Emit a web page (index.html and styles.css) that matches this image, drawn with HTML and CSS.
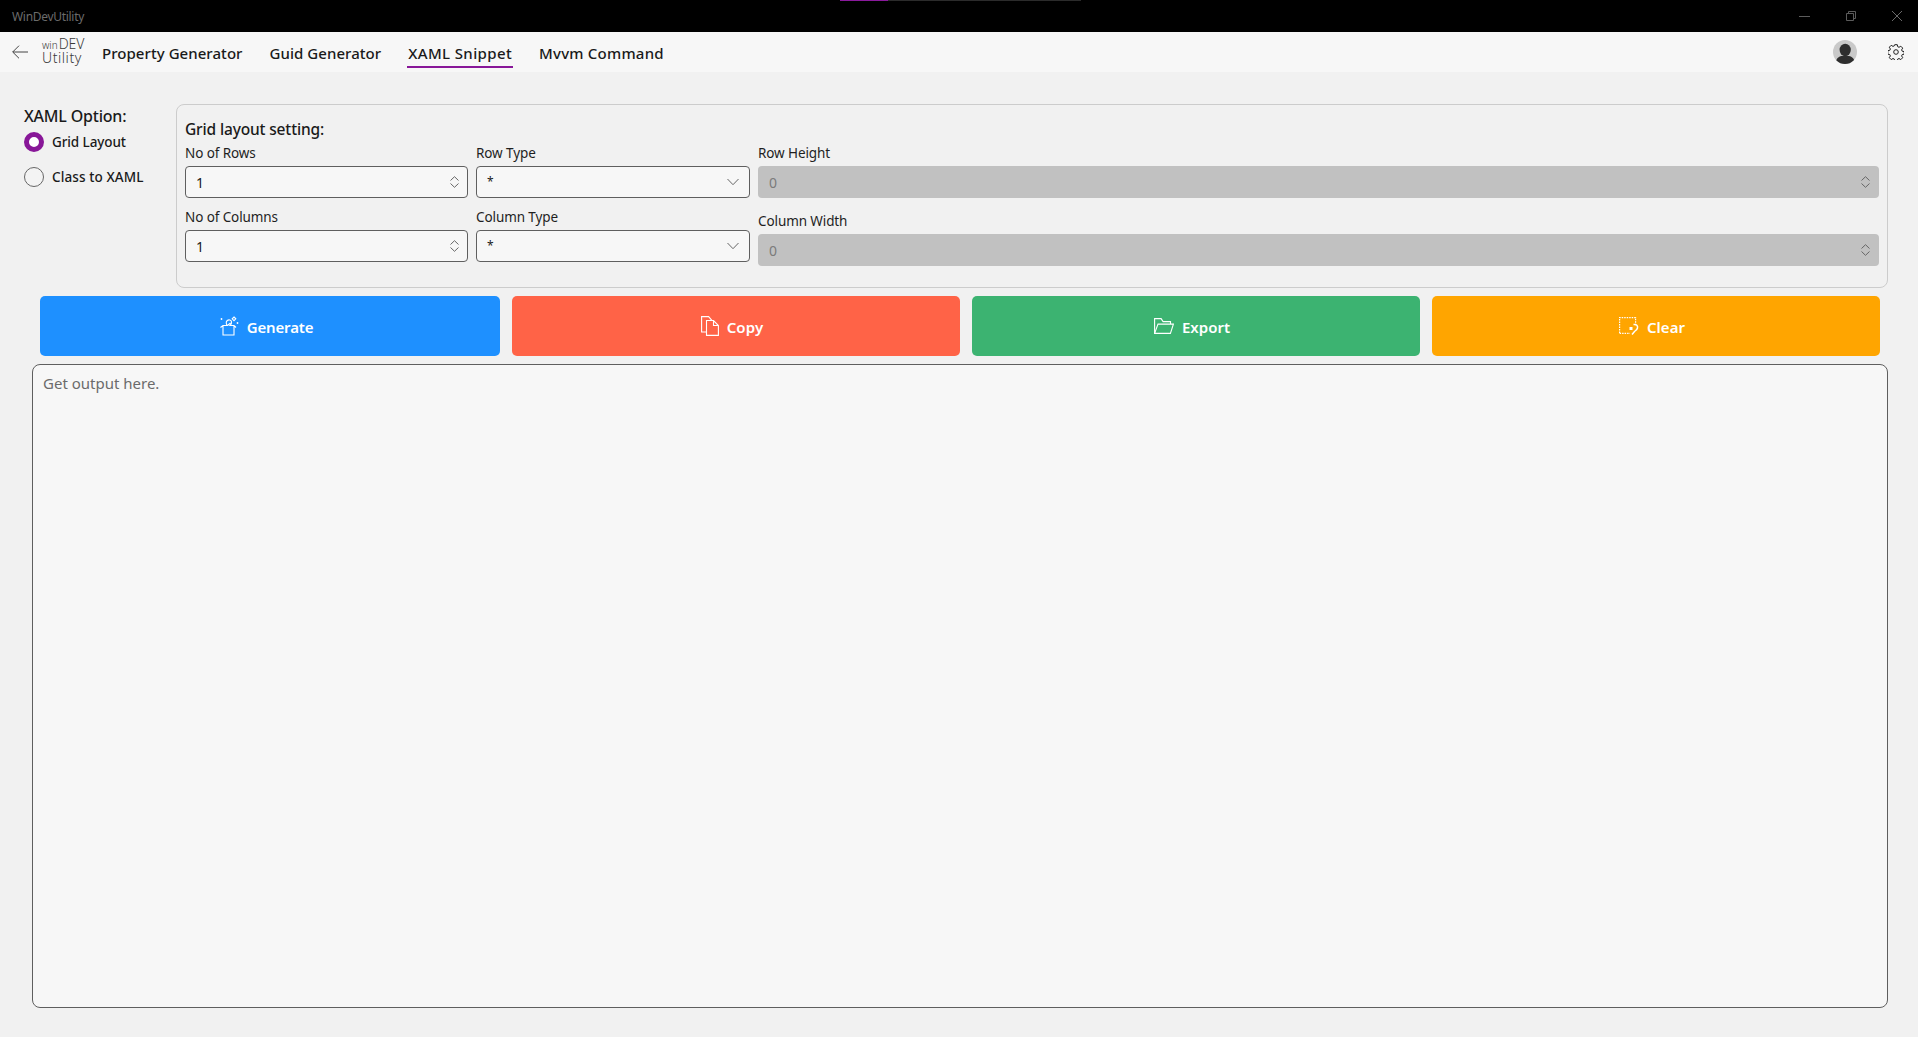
FILE: index.html
```html
<!DOCTYPE html>
<html lang="en">
<head>
<meta charset="utf-8">
<title>WinDevUtility</title>
<link rel="stylesheet" href="styles.css">
</head>
<body>
<div class="progress"><span class="progress-fill"></span><span class="progress-rest"></span></div>
<header class="titlebar">
  <span class="app-title">WinDevUtility</span>
  <div class="window-controls">
    <svg class="win-min" width="11" height="1" viewBox="0 0 11 1"><path d="M0 .5h11" stroke="#5c5c5c"/></svg>
    <svg class="win-restore" width="10" height="10" viewBox="0 0 10 10" fill="none" stroke="#5c5c5c"><path d="M.5 2.5h7v7h-7zM2.5 2.5v-2h7v7h-2"/></svg>
    <svg class="win-close" width="10" height="10" viewBox="0 0 10 10" fill="none" stroke="#6a6a6a"><path d="M0 0l10 10M10 0L0 10"/></svg>
  </div>
</header>
<nav class="navbar">
  <svg class="back" width="16" height="14" viewBox="0 0 16 14" fill="none" stroke="#444" stroke-width="1"><path d="M16 7H.8M7 .7L.7 7l6.3 6.3"/></svg>
  <div class="logo"><div class="logo-top"><span class="logo-win">win</span><span class="logo-dev">DEV</span></div><div class="logo-util">Utility</div></div>
  <div class="tabs">
    <a class="tab">Property Generator</a>
    <a class="tab">Guid Generator</a>
    <a class="tab tab-active">XAML Snippet</a>
    <a class="tab tab-mvvm">Mvvm Command</a>
  </div>
  <div class="nav-right">
    <svg class="avatar" width="24" height="24" viewBox="0 0 24 24"><circle cx="12" cy="12" r="12" fill="#c9c9c9"/><clipPath id="av"><circle cx="12" cy="12" r="12"/></clipPath><g clip-path="url(#av)" fill="#2e2e2e"><ellipse cx="12.2" cy="10" rx="5.6" ry="6.2"/><path d="M2.5 24c0-5 3-7.500 6-8h7.500c3 .5 6 3 6 8z"/></g></svg>
    <svg class="gear" width="16" height="16" viewBox="0 0 16 16" fill="none" stroke="#222" stroke-width="1"><circle cx="8" cy="8" r="2.300"/><path d="M6.700.7h2.600l.4 2 1.300.6 1.800-1.100 1.900 1.900-1.100 1.800.6 1.300 2 .4v2.600l-2 .4-.6 1.300 1.100 1.800-1.900 1.900-1.800-1.100-1.300.6-.4 2H6.700l-.4-2-1.300-.6-1.800 1.100-1.900-1.900 1.100-1.800-.6-1.300-2-.4V6.700l2-.4.6-1.300-1.100-1.800 1.900-1.900L5 2.400l1.300-.6z"/></svg>
  </div>
</nav>
<main class="content">
  <section class="options">
    <aside class="xaml-option">
      <div class="option-title">XAML Option:</div>
      <label class="radio"><span class="radio-dot radio-on"></span>Grid Layout</label>
      <label class="radio radio-second"><span class="radio-dot"></span>Class to XAML</label>
    </aside>
    <div class="group">
      <div class="group-title">Grid layout setting:</div>
      <div class="group-cols">
        <div class="col col-a">
          <div class="field"><div class="field-label">No of Rows</div>
            <div class="input"><span>1</span><svg class="spin" width="9" height="12" viewBox="0 0 9 12" fill="none" stroke="#666"><path d="M.5 4.500L4.500.7l4 3.800M.5 7.500l4 3.800 4-3.800"/></svg></div></div>
          <div class="field"><div class="field-label">No of Columns</div>
            <div class="input"><span>1</span><svg class="spin" width="9" height="12" viewBox="0 0 9 12" fill="none" stroke="#666"><path d="M.5 4.500L4.500.7l4 3.800M.5 7.500l4 3.800 4-3.800"/></svg></div></div>
        </div>
        <div class="col col-b">
          <div class="field"><div class="field-label">Row Type</div>
            <div class="input"><span class="star">*</span><svg class="chev" width="12" height="8" viewBox="0 0 12 8" fill="none" stroke="#666"><path d="M.5 1L6 6.700 11.500 1"/></svg></div></div>
          <div class="field"><div class="field-label">Column Type</div>
            <div class="input"><span class="star">*</span><svg class="chev" width="12" height="8" viewBox="0 0 12 8" fill="none" stroke="#666"><path d="M.5 1L6 6.700 11.500 1"/></svg></div></div>
        </div>
        <div class="col col-c">
          <div class="field"><div class="field-label">Row Height</div>
            <div class="input input-off"><span>0</span><svg class="spin" width="9" height="12" viewBox="0 0 9 12" fill="none" stroke="#666"><path d="M.5 4.500L4.500.7l4 3.800M.5 7.500l4 3.800 4-3.800"/></svg></div></div>
          <div class="field"><div class="field-label">Column Width</div>
            <div class="input input-off"><span>0</span><svg class="spin" width="9" height="12" viewBox="0 0 9 12" fill="none" stroke="#666"><path d="M.5 4.500L4.500.7l4 3.800M.5 7.500l4 3.800 4-3.800"/></svg></div></div>
        </div>
      </div>
    </div>
  </section>
  <section class="actions">
    <button class="btn btn-generate">
      <svg width="20" height="20" viewBox="0 0 20 20" fill="none" stroke="#fff" stroke-width="1.100"><path d="M4 9.500V19h11V9.500M1.500 11.500L4 9.500h4.500l3-2.500M15 9.500l2 2M8.500 9.500c-1.500-1-1.800-3.800-.2-5 1.600-1.200 3.800-.5 4.200 1.200.3 1.500-.2 2.800-1.500 3.800H15"/><path d="M15 1l1.800 1.800L15 4.600l-1.800-1.800z"/><circle cx="2.500" cy="3" r=".9" fill="#fff" stroke="none"/><circle cx="18.500" cy="7" r=".9" fill="#fff" stroke="none"/></svg>
      <span class="btn-text">Generate</span></button>
    <button class="btn btn-copy">
      <svg width="18" height="20" viewBox="0 0 18 20" fill="none" stroke="#fff" stroke-width="1.100"><path d="M5.500 16H.6V.6h7l3.500 4"/><path d="M5.500 4.500h7l4.900 5V19.400H5.500zM12.500 4.500v5h4.900"/></svg>
      <span class="btn-text">Copy</span></button>
    <button class="btn btn-export">
      <svg width="20" height="16" viewBox="0 0 20 16" fill="none" stroke="#fff" stroke-width="1.100"><path d="M.6 15.400V.6h6.500l2 3h7.400v2.500"/><path d="M.6 15.400L4 6.100h15.400l-3 9.300z"/></svg>
      <span class="btn-text">Export</span></button>
    <button class="btn btn-clear">
      <svg width="20" height="18" viewBox="0 0 20 18" fill="none" stroke="#fff" stroke-width="1.200"><path stroke-dasharray="1.500 1" d="M.6 16V.6h16V8M.6 16.300H11"/><path d="M14.500 7.500c3-.5 4.500 1.500 4 3.500-.3 1.500-1.500 2.500-3 3.500L13 17.500" stroke-width="1.500"/><rect x="10.500" y="10" width="3" height="3" fill="#fff" stroke="none"/></svg>
      <span class="btn-text">Clear</span></button>
  </section>
  <div class="output">Get output here.</div>
</main>
</body>
</html>
```

FILE: styles.css
```css
* { box-sizing: border-box; }
html, body { margin: 0; height: 100%; }
body {
  display: flex;
  flex-direction: column;
  height: 100vh;
  overflow: hidden;
  background: #f1f1f1;
  color: #1a1a1a;
  font-family: "Noto Sans", "Open Sans", sans-serif;
  font-size: 13px;
  position: relative;
}
.progress { position: absolute; top: 0; left: 840px; display: flex; height: 1px; }
.progress-fill { width: 48px; background: #8a1a9c; }
.progress-rest { width: 193px; background: #2b2b2b; }

.titlebar {
  flex: none;
  height: 32px;
  background: #000;
  display: flex;
  align-items: center;
  padding-left: 12px;
}
.app-title { color: #6b6b6b; font-size: 12px; letter-spacing: -0.3px; }
.window-controls { margin-left: auto; display: flex; align-items: center; }
.win-min { margin-right: 36px; }
.win-restore { margin-right: 36px; }
.win-close { margin-right: 16px; }

.navbar {
  flex: none;
  height: 40px;
  background: #f7f7f7;
  display: flex;
  align-items: flex-start;
  padding-left: 12px;
}
.back { flex: none; margin-top: 13px; }
.logo { flex: none; margin-left: 14px; margin-top: 6px; width: 49px; color: #3a3a3a; line-height: 11px; font-weight: 300; }
.logo-top { display: flex; align-items: baseline; }
.logo-win { font-size: 10px; }
.logo-dev { font-size: 14px; letter-spacing: 0; margin-left: 1px; }
.logo-util { font-size: 14px; letter-spacing: .55px; margin-top: 1px; }
.tabs { display: flex; gap: 25px; align-items: flex-start; margin-left: 10px; }
.tab {
  height: 36px;
  padding: 10px 1px 0;
  font-size: 15px;
  line-height: 22px;
  font-weight: 500;
  letter-spacing: 0.05px;
  border-bottom: 2px solid transparent;
  color: #1a1a1a;
}
.tab-active { border-bottom-color: #881798; letter-spacing: 0.38px; }
.tab-mvvm { letter-spacing: 0.22px; }
.nav-right { margin-left: auto; display: flex; align-items: center; padding-top: 8px; }
.gear { margin-left: 31px; margin-right: 14px; }

.content {
  flex: 1;
  min-height: 0;
  display: flex;
  flex-direction: column;
  padding-top: 32px;
}
.options { display: flex; margin-right: 30px; padding-left: 24px; }
.xaml-option { width: 152px; }
.option-title { font-size: 16px; font-weight: 500; line-height: 24px; letter-spacing: -0.2px; }
.radio { display: flex; align-items: center; gap: 8px; height: 20px; margin-top: 4px; font-size: 13.500px; font-weight: 500; letter-spacing: -0.1px; }
.radio-second { margin-top: 15px; letter-spacing: 0.1px; }
.radio-dot { width: 20px; height: 20px; border-radius: 50%; border: 1px solid #666; background: #f3f3f3; flex: none; }
.radio-on { border: 5.500px solid #881798; background: #fff; }

.group {
  flex: 1;
  height: 184px;
  border: 1px solid #ccc;
  border-radius: 8px;
  padding: 12px 8px 0;
}
.group-title { font-size: 15.500px; line-height: 24px; font-weight: 500; letter-spacing: -0.15px; }
.group-cols { display: flex; gap: 8px; margin-top: 2px; }
.col { display: flex; flex-direction: column; gap: 9px; }
.col-a { width: 283px; }
.col-b { width: 274px; }
.col-c { flex: 1; gap: 13px; }
.field-label { font-size: 13.500px; line-height: 20px; margin-bottom: 3px; letter-spacing: -0.1px; color: #1f1f1f; }
.input {
  height: 32px;
  border: 1px solid #5f5f5f;
  border-radius: 4px;
  background: #f7f7f7;
  display: flex;
  align-items: center;
  justify-content: space-between;
  padding: 0 8px 0 10px;
  font-size: 14px;
}
.input-off { border: none; background: #c1c1c1; color: #7b7b7b; padding: 0 9px 0 11px; }
.star { position: relative; top: -1px; font-size: 12px; }
.col-b .input { padding-right: 10px; }

.actions {
  display: grid;
  grid-template-columns: 460px 448px 448px 448px;
  gap: 12px;
  margin: 8px 0 0 40px;
}
.btn {
  height: 60px;
  border: none;
  border-radius: 5px;
  color: #fff;
  font-family: inherit;
  font-size: 15px;
  font-weight: 600;
  letter-spacing: 0;
  display: flex;
  align-items: center;
  justify-content: center;
  gap: 8px;
  padding: 0 8px 0 0;
}
.btn-text { padding-top: 1px; }
.btn-generate { background: #1e90ff; letter-spacing: -0.15px; }
.btn-copy { background: #ff6347; letter-spacing: 0.15px; }
.btn-export { background: #3cb371; }
.btn-clear { background: #ffa500; }

.output {
  flex: 1;
  min-height: 0;
  margin: 8px 30px 29px 32px;
  border: 1px solid #5f5f5f;
  border-radius: 8px;
  background: #f7f7f7;
  padding: 7px 10px;
  font-size: 15px;
  line-height: 22px;
  color: #6b6b6b;
  letter-spacing: 0;
}
```
